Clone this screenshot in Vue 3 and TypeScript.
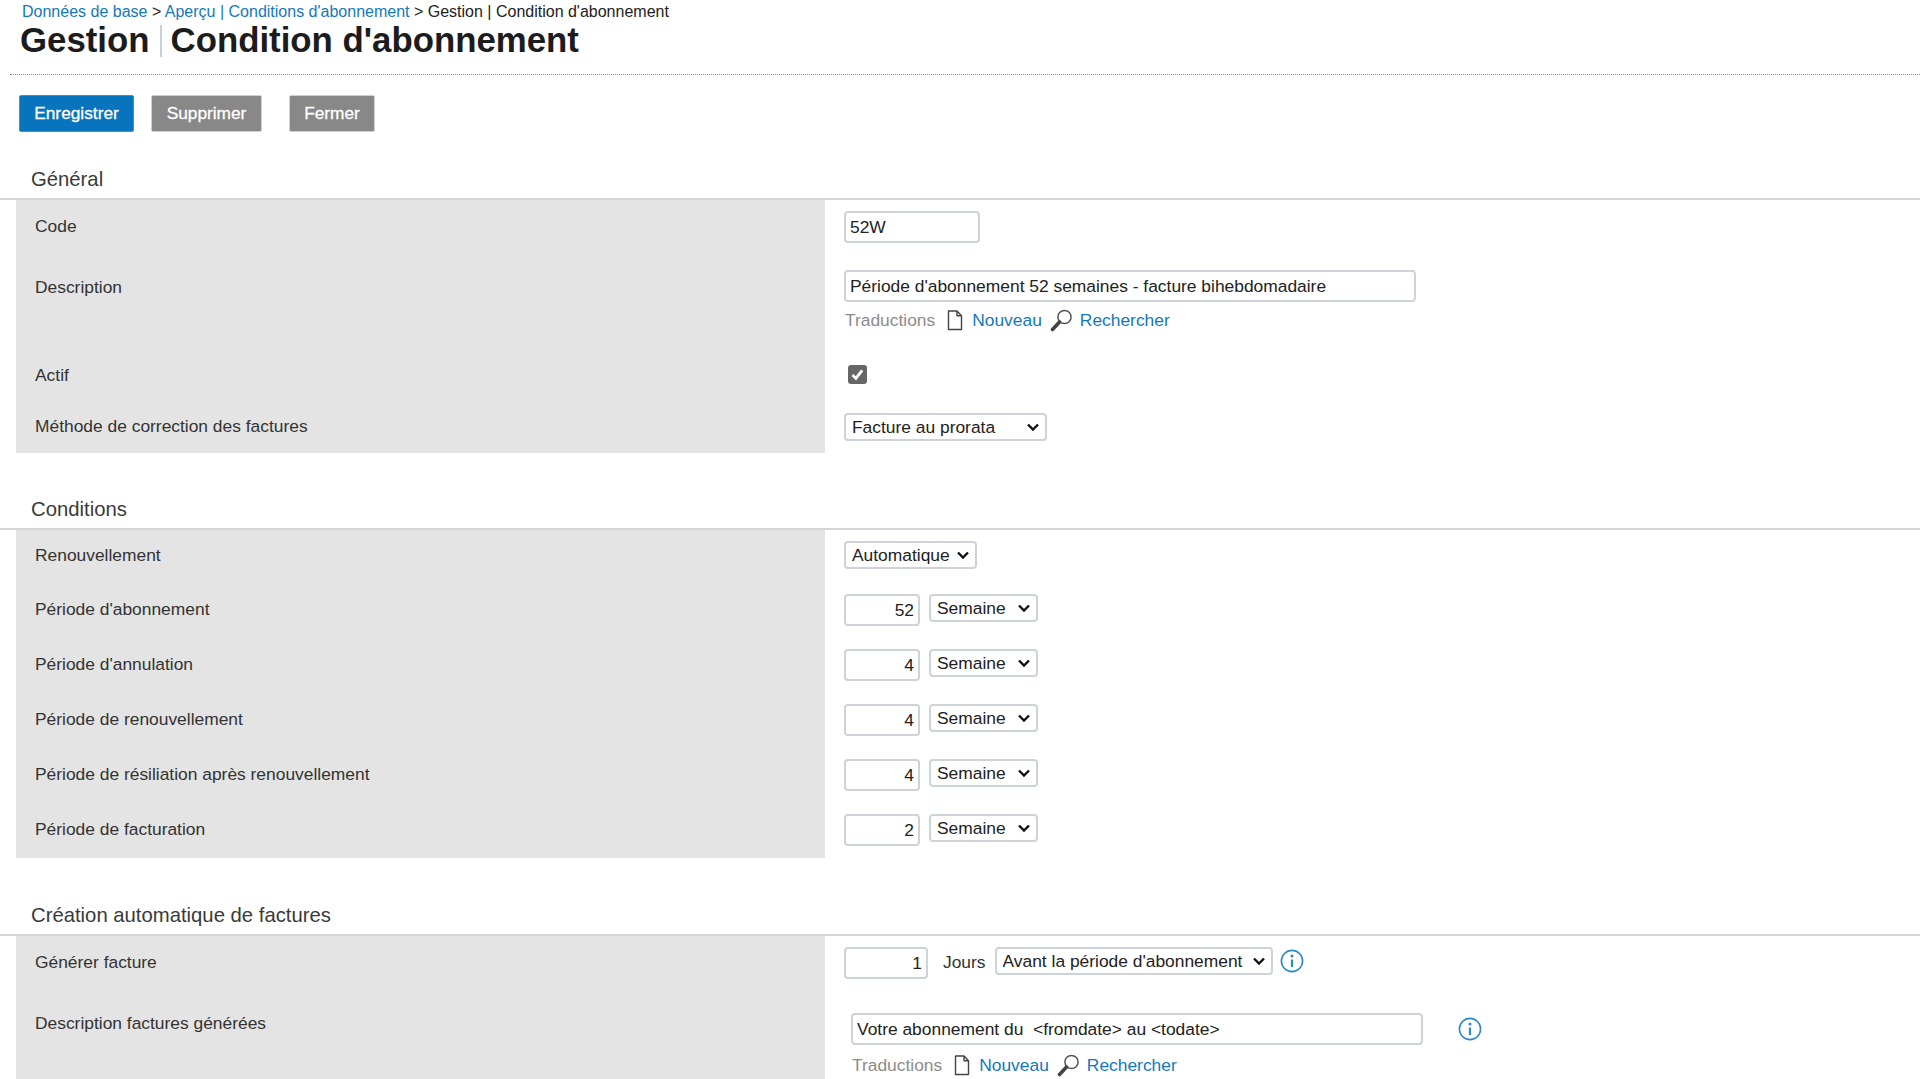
<script setup lang="ts">
interface PeriodRow { label: string; value: string }
const periods: PeriodRow[] = [
  { label: "Période d'abonnement", value: '52' },
  { label: "Période d'annulation", value: '4' },
  { label: 'Période de renouvellement', value: '4' },
  { label: 'Période de résiliation après renouvellement', value: '4' },
  { label: 'Période de facturation', value: '2' },
]
</script>

<template>
  <div class="page">
    <nav class="crumbs">
      <a>Données de base</a> &gt; <a>Aperçu | Conditions d'abonnement</a> &gt; Gestion | Condition d'abonnement
    </nav>
    <h1 class="title">Gestion<span class="sep"></span>Condition d'abonnement</h1>
    <div class="rule"></div>
    <div class="actions">
      <button class="btn primary save">Enregistrer</button>
      <button class="btn del">Supprimer</button>
      <button class="btn close">Fermer</button>
    </div>

    <section class="general">
      <h2>Général</h2>
      <div class="row r-code">
        <div class="lab">Code</div>
        <div class="val"><input class="inp w-code" value="52W" /></div>
      </div>
      <div class="row r-desc">
        <div class="lab">Description</div>
        <div class="val">
          <input class="inp w-desc" value="Période d'abonnement 52 semaines - facture bihebdomadaire" />
          <div class="trans">
            <span class="t-lab">Traductions</span>
            <svg class="ic-doc" viewBox="0 0 16 22" width="16" height="22"><path d="M1.5 2h8.5l4.5 4.8v13.7h-13z M10 2v4.8h4.5" fill="#fff" stroke="#444" stroke-width="1.4" stroke-linejoin="round"/></svg>
            <a>Nouveau</a>
            <svg class="ic-search" viewBox="0 0 24 24" width="24" height="24"><circle cx="15.5" cy="9" r="6.6" fill="none" stroke="#555" stroke-width="1.5"/><path d="M10.5 14 3.5 21.5" stroke="#444" stroke-width="3.6" stroke-linecap="round"/></svg>
            <a>Rechercher</a>
          </div>
        </div>
      </div>
      <div class="row r-actif">
        <div class="lab">Actif</div>
        <div class="val"><span class="check"><svg viewBox="0 0 19 19" width="19" height="19"><path d="M4.5 10l3.4 3.4 6.3-8" fill="none" stroke="#fff" stroke-width="2.8"/></svg></span></div>
      </div>
      <div class="row r-meth">
        <div class="lab">Méthode de correction des factures</div>
        <div class="val"><select class="sel w-meth"><option>Facture au prorata</option></select></div>
      </div>
    </section>

    <section class="conditions">
      <h2>Conditions</h2>
      <div class="row r-renew">
        <div class="lab">Renouvellement</div>
        <div class="val"><select class="sel w-auto"><option>Automatique</option></select></div>
      </div>
      <div v-for="p in periods" :key="p.label" class="row r-per">
        <div class="lab">{{ p.label }}</div>
        <div class="val inline">
          <input class="inp num w-num" :value="p.value" />
          <select class="sel w-unit"><option>Semaine</option></select>
        </div>
      </div>
    </section>

    <section class="auto">
      <h2>Création automatique de factures</h2>
      <div class="row r-gen">
        <div class="lab">Générer facture</div>
        <div class="val inline">
          <input class="inp num w-days" value="1" />
          <span class="jours">Jours</span>
          <select class="sel w-when"><option>Avant la période d'abonnement</option></select>
          <svg class="info" viewBox="0 0 24 24" width="24" height="24"><circle cx="12" cy="12" r="10.6" fill="none" stroke="#2a8ac8" stroke-width="1.6"/><path d="M12 10.5v7.5" stroke="#2a8ac8" stroke-width="2.2"/><circle cx="12" cy="7" r="1.5" fill="#2a8ac8"/></svg>
        </div>
      </div>
      <div class="row r-gdesc">
        <div class="lab">Description factures générées</div>
        <div class="val shifted">
          <div class="inline">
            <input class="inp w-desc" value="Votre abonnement du  <fromdate> au <todate>" />
            <svg class="info far" viewBox="0 0 24 24" width="24" height="24"><circle cx="12" cy="12" r="10.6" fill="none" stroke="#2a8ac8" stroke-width="1.6"/><path d="M12 10.5v7.5" stroke="#2a8ac8" stroke-width="2.2"/><circle cx="12" cy="7" r="1.5" fill="#2a8ac8"/></svg>
          </div>
          <div class="trans">
            <span class="t-lab">Traductions</span>
            <svg class="ic-doc" viewBox="0 0 16 22" width="16" height="22"><path d="M1.5 2h8.5l4.5 4.8v13.7h-13z M10 2v4.8h4.5" fill="#fff" stroke="#444" stroke-width="1.4" stroke-linejoin="round"/></svg>
            <a>Nouveau</a>
            <svg class="ic-search" viewBox="0 0 24 24" width="24" height="24"><circle cx="15.5" cy="9" r="6.6" fill="none" stroke="#555" stroke-width="1.5"/><path d="M10.5 14 3.5 21.5" stroke="#444" stroke-width="3.6" stroke-linecap="round"/></svg>
            <a>Rechercher</a>
          </div>
        </div>
      </div>
    </section>
  </div>
</template>

<style>
html, body { margin: 0; overflow: hidden; background: #fff; }
</style>

<style scoped>
.page {
  height: 1079px;
  overflow: hidden;
  box-sizing: border-box;
  font-family: "Liberation Sans", Arial, sans-serif;
  font-size: 17.4px;
  color: #333;
}
a { color: #1378be; }
.crumbs {
  height: 24px;
  line-height: 24px;
  padding-left: 22px;
  font-size: 16px;
  color: #222;
}
.title {
  margin: 0;
  padding-left: 20px;
  height: 36px;
  line-height: 32px;
  font-size: 34.8px;
  font-weight: 700;
  color: #1c1c1c;
  display: flex;
  align-items: flex-start;
}
.sep {
  display: inline-block;
  width: 2px;
  height: 32px;
  background: #c4d2da;
  margin: 1px 9px 0 10px;
}
.rule {
  margin: 14px 0 0 10px;
  border-top: 1px dotted #7c95a2;
}
.actions {
  display: flex;
  padding: 20px 0 0 19px;
}
.btn {
  height: 37px;
  padding: 0;
  border: 1px solid #c9d2d8;
  border-radius: 2px;
  color: #fff;
  font: 400 17.3px "Liberation Sans", Arial, sans-serif;
  -webkit-text-stroke: 0.3px #fff;
  background: #888;
}
.btn.primary { background: #0874bd; border-color: #3a93cf; }
.save { width: 115px; }
.del { width: 111px; margin-left: 17px; }
.close { width: 86px; margin-left: 27px; }

h2 {
  margin: 0;
  padding-left: 31px;
  font-size: 20.3px;
  font-weight: 400;
  color: #3a3a3a;
  height: 36px;
  line-height: 34px;
  border-bottom: 2px solid #d6d6d6;
}
.general { margin-top: 30px; }
.conditions { margin-top: 39px; }
.auto { margin-top: 40px; }

.row {
  display: grid;
  grid-template-columns: 809px 1fr;
  margin-left: 16px;
}
.lab {
  background: #e4e4e4;
  padding-left: 19px;
  line-height: 20px;
}
.val { padding-left: 19px; min-width: 0; }
.inline { display: flex; align-items: flex-start; }

.inp, .sel {
  box-sizing: border-box;
  border: 2px solid #ccd4da;
  border-radius: 4px;
  background-color: #fff;
  font: 17.4px "Liberation Sans", Arial, sans-serif;
  color: #222;
  outline: none;
}
.inp { height: 32px; padding: 0 4px; }
.sel {
  height: 28px;
  padding: 0 18px 0 6px;
  appearance: none;
  background-image: url("data:image/svg+xml,%3Csvg xmlns='http://www.w3.org/2000/svg' width='14' height='10'%3E%3Cpath d='M2 2.5l5 5 5-5' fill='none' stroke='%23111' stroke-width='2.4'/%3E%3C/svg%3E");
  background-repeat: no-repeat;
  background-position: right 5px center;
}
.num { text-align: right; }
.w-code { width: 136px; }
.w-desc { width: 572px; }
.w-meth { width: 203px; }
.w-auto { width: 133px; }
.w-num { width: 76px; }
.w-unit { width: 109px; margin-left: 9px; }
.w-days { width: 84px; }
.w-when { width: 278px; }

.trans {
  display: flex;
  align-items: center;
  height: 26px;
  margin-top: 5px;
  margin-left: 1px;
}
.t-lab { color: #8c8c8c; }
.ic-doc { margin-left: 12px; margin-right: 9px; }
.ic-search { margin-left: 7px; margin-right: 7px; }

.r-code { height: 61px; } .r-code .lab { padding-top: 16px; } .r-code .val { padding-top: 11px; }
.r-desc { height: 95px; } .r-desc .lab { padding-top: 16px; } .r-desc .val { padding-top: 9px; }
.r-actif { height: 45px; } .r-actif .lab { padding-top: 9px; } .r-actif .val { padding-top: 9px; }
.r-meth { height: 52px; } .r-meth .lab { padding-top: 15px; } .r-meth .val { padding-top: 12px; }
.check {
  display: block;
  width: 19px;
  height: 19px;
  margin-left: 4px;
  border-radius: 3px;
  background: #666;
}
.check svg { display: block; }

.r-renew { height: 57px; } .r-renew .lab { padding-top: 15px; } .r-renew .val { padding-top: 11px; }
.r-per { height: 55px; } .r-per .lab { padding-top: 12px; } .r-per .val { padding-top: 7px; }
.r-per:last-child { height: 51px; }

.r-gen { height: 61px; } .r-gen .lab { padding-top: 16px; } .r-gen .val { padding-top: 11px; }
.r-gen .jours { margin: 5px 9px 0 15px; line-height: 20px; }
.info { margin: 2px 0 0 7px; flex: none; }
.info.far { margin: 4px 0 0 35px; }
.r-gdesc { height: 100px; } .r-gdesc .lab { padding-top: 16px; } .r-gdesc .val { padding-top: 16px; }
.r-gdesc .trans { margin-top: 7px; }
.shifted { padding-left: 26px; }
</style>
